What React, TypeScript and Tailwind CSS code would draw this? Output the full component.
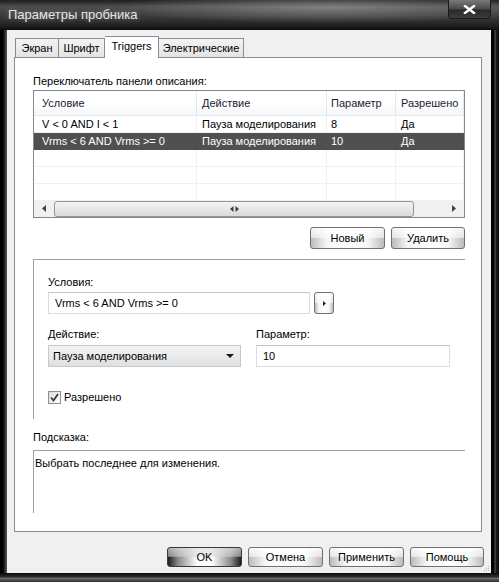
import React from 'react'

const btnLight =
  'bg-[linear-gradient(to_bottom,rgba(255,255,255,0.9)_0%,rgba(255,255,255,0.55)_48%,rgba(255,255,255,0)_52%),linear-gradient(to_right,#bcbcbc,#f6f6f6_22%,#ffffff_50%,#f6f6f6_78%,#bcbcbc)]'

function PushButton({ label, primary, w }: { label: string; primary?: boolean; w: string }) {
  return (
    <div
      className={
        'h-[20px] rounded-[3px] border flex items-center justify-center ' +
        w +
        ' ' +
        (primary
          ? 'border-[#3a3a3a] bg-[linear-gradient(to_bottom,rgba(225,225,225,0.75)_0%,rgba(215,215,215,0.55)_46%,rgba(255,255,255,0)_52%),linear-gradient(to_right,#1c1c1c,#8c8c8c_14%,#ffffff_40%,#ffffff_60%,#8c8c8c_86%,#1c1c1c)]'
          : 'border-[#707070] ' + btnLight)
      }
    >
      {label}
    </div>
  )
}

function Tri({ dir }: { dir: 'l' | 'r' }) {
  return (
    <svg width="4" height="7" viewBox="0 0 4 7">
      {dir === 'l' ? <path d="M4 0 L0 3.5 L4 7 Z" fill="#404040" /> : <path d="M0 0 L4 3.5 L0 7 Z" fill="#404040" />}
    </svg>
  )
}

const cols = [
  { w: 'w-[163px]', pl: 'pl-[8px]' },
  { w: 'w-[130px]', pl: 'pl-[5px]' },
  { w: 'w-[69px]', pl: 'pl-[4px]' },
  { w: 'flex-1', pl: 'pl-[5px]' },
]

const rows = [
  ['V < 0 AND I < 1', 'Пауза моделирования', '8', 'Да'],
  ['Vrms < 6 AND Vrms >= 0', 'Пауза моделирования', '10', 'Да'],
]

function TriggerTable() {
  const headers = ['Условие', 'Действие', 'Параметр', 'Разрешено']
  return (
    <div className="mt-[2px] w-[432px] h-[128px] border border-[#828790] bg-white flex flex-col overflow-hidden">
      <div className="h-[25px] flex bg-[linear-gradient(to_bottom,#ffffff_0%,#ffffff_50%,#f3f6fa_100%)] border-b border-[#e3e9ef] text-[#1c2230]">
        {headers.map((h, i) => (
          <div
            key={h}
            className={'flex items-center whitespace-nowrap overflow-hidden border-r border-[#e3e8ee] ' + cols[i].w + ' ' + cols[i].pl}
          >
            {h}
          </div>
        ))}
      </div>
      {rows.map((r, ri) => (
        <div
          key={ri}
          className={
            'h-[17px] flex ' + (ri === 1 ? 'bg-[#505050] text-white' : 'border-b border-[#f0f0f0]')
          }
        >
          {r.map((c, ci) => (
            <div
              key={ci}
              className={
                'flex items-center whitespace-nowrap overflow-hidden ' +
                cols[ci].w +
                ' ' +
                cols[ci].pl +
                (ri === 1 ? '' : ' border-r border-[#f0f0f0]')
              }
            >
              {c}
            </div>
          ))}
        </div>
      ))}
      {[0, 1].map((k) => (
        <div key={k} className="h-[17px] flex border-b border-[#f0f0f0]">
          {cols.map((c, ci) => (
            <div key={ci} className={'border-r border-[#f0f0f0] ' + c.w} />
          ))}
        </div>
      ))}
      <div className="flex-1 flex">
        {cols.map((c, ci) => (
          <div key={ci} className={'border-r border-[#f0f0f0] ' + c.w} />
        ))}
      </div>
      <div className="h-[17px] flex items-center bg-[#f0f0f0]">
        <div className="w-[20px] flex justify-center">
          <Tri dir="l" />
        </div>
        <div className="w-[360px] h-[16px] rounded-[3px] border border-[#959595] bg-[linear-gradient(to_bottom,#f4f4f4,#e8e8e8_50%,#dadada)] flex items-center justify-center">
          <svg width="9" height="6" viewBox="0 0 9 6">
            <path d="M3.5 0 L0 3 L3.5 6 Z M5.5 0 L9 3 L5.5 6 Z" fill="#3c3c3c" />
          </svg>
        </div>
        <div className="flex-1" />
        <div className="w-[20px] flex justify-center">
          <Tri dir="r" />
        </div>
      </div>
    </div>
  )
}

function ConditionGroup() {
  return (
    <div className="mt-[10px] w-[432px] h-[160px] border-t border-l border-[#a0a0a0] pl-[14px] flex flex-col">
      <div className="mt-[16px] h-[13px] leading-[13px]">Условия:</div>
      <div className="mt-[3px] flex gap-[4px]">
        <div className="w-[262px] h-[22px] border border-[#dcdcdc] border-t-[#c4c4c4] bg-white flex items-center pl-[6px]">
          Vrms &lt; 6 AND Vrms &gt;= 0
        </div>
        <div className={'w-[20px] h-[22px] rounded-[3px] border border-[#707070] flex items-center justify-center ' + btnLight}>
          <svg width="3" height="5" viewBox="0 0 3 5">
            <path d="M0 0 L3 2.5 L0 5 Z" fill="#202020" />
          </svg>
        </div>
      </div>
      <div className="mt-[14px] flex gap-[15px]">
        <div className="flex flex-col">
          <div className="h-[13px] leading-[13px]">Действие:</div>
          <div className="mt-[4px] w-[193px] h-[22px] border border-[#c8c8c8] bg-[linear-gradient(to_bottom,#f3f3f3,#ebebeb_50%,#dfdfdf)] flex items-center pl-[4px] pr-[6px]">
            <span className="flex-1">Пауза моделирования</span>
            <svg width="8" height="4" viewBox="0 0 8 4">
              <path d="M0 0 L8 0 L4 4 Z" fill="#1a1a1a" />
            </svg>
          </div>
        </div>
        <div className="flex flex-col">
          <div className="h-[13px] leading-[13px]">Параметр:</div>
          <div className="mt-[4px] w-[194px] h-[22px] border border-[#dcdcdc] border-t-[#c4c4c4] bg-white flex items-center pl-[6px]">
            10
          </div>
        </div>
      </div>
      <div className="mt-[22px] flex items-center gap-[3px]">
        <div className="w-[13px] h-[13px] border border-[#8e8f8f] bg-[linear-gradient(to_bottom_right,#dcdcdc,#ffffff)] flex items-center justify-center">
          <svg width="9" height="9" viewBox="0 0 9 9">
            <path d="M1 4.5 L3.5 7.5 L8 1" fill="none" stroke="#3a3a3a" strokeWidth="1.8" />
          </svg>
        </div>
        <span>Разрешено</span>
      </div>
    </div>
  )
}

export default function App() {
  return (
    <div className="w-[499px] h-[582px] flex flex-col bg-black font-['Liberation_Sans',Arial,sans-serif] text-[11px] text-black overflow-hidden">
      {/* title bar */}
      <div className="h-[30px] flex items-start bg-[radial-gradient(ellipse_220px_16px_at_66%_25%,rgba(190,190,190,0.45),rgba(190,190,190,0)),linear-gradient(to_bottom,#1e1e1e_0%,#4c4c4c_22%,#3a3a3a_55%,#1c1c1c_90%,#0c0c0c_100%)]">
        <div className="pl-[8px] h-[30px] flex items-center text-[13px] text-[#e6e6e6] [text-shadow:0_0_6px_rgba(255,255,255,0.35)]">
          Параметры пробника
        </div>
        <div className="flex-1" />
        <div className="mr-[8px] w-[43px] h-[19px] rounded-b-[4px] border border-t-0 border-[#1a1a1a] bg-[linear-gradient(to_bottom,#7a7a7a,#4a4a4a_50%,#2a2a2a_55%,#3c3c3c)] flex items-center justify-center">
          <svg width="13" height="9" viewBox="0 0 13 9">
            <path d="M2 1 L11 8 M11 1 L2 8" stroke="#ffffff" strokeWidth="2.4" strokeLinecap="square" />
          </svg>
        </div>
      </div>

      <div className="flex flex-1 min-h-0">
        <div className="w-[7px] bg-[linear-gradient(to_right,#000000_40%,#5a5a5a)]" />

        {/* client area */}
        <div className="w-[484px] bg-[#f0f0f0] flex flex-col pt-[6px] relative">
          {/* tabs */}
          <div className="h-[21px] pl-[8px] flex items-end">
            <div className="w-[44px] h-[19px] border border-b-0 border-[#898c95] bg-[linear-gradient(to_bottom,#f3f3f3,#e4e4e4)] flex items-center justify-center">
              Экран
            </div>
            <div className="w-[46px] h-[19px] border border-l-0 border-b-0 border-[#898c95] bg-[linear-gradient(to_bottom,#f3f3f3,#e4e4e4)] flex items-center justify-center">
              Шрифт
            </div>
            <div className="relative z-10 -mb-[1px] w-[54px] h-[22px] border border-l-0 border-b-0 border-[#898c95] bg-white flex items-center justify-center pb-[2px]">
              Triggers
            </div>
            <div className="w-[85px] h-[19px] border border-l-0 border-b-0 border-[#898c95] bg-[linear-gradient(to_bottom,#f3f3f3,#e4e4e4)] flex items-center justify-center">
              Электрические
            </div>
          </div>

          {/* tab panel */}
          <div className="ml-[7px] w-[468px] h-[475px] border border-[#898c95] bg-white flex flex-col pl-[18px]">
            <div className="mt-[17px] h-[13px] leading-[13px]">Переключатель панели описания:</div>
            <TriggerTable />
            <div className="mt-[9px] w-[432px] flex justify-end gap-[6px]">
              <div className={'w-[75px] h-[22px] rounded-[3px] border border-[#707070] flex items-center justify-center ' + btnLight}>
                Новый
              </div>
              <div className={'w-[74px] h-[22px] rounded-[3px] border border-[#707070] flex items-center justify-center ' + btnLight}>
                Удалить
              </div>
            </div>
            <ConditionGroup />
            <div className="mt-[12px] h-[13px] leading-[13px]">Подсказка:</div>
            <div className="mt-[6px] w-[432px] h-[63px] border-t border-l border-[#a0a0a0] pt-[4px] pl-[1px]">
              Выбрать последнее для изменения.
            </div>
          </div>

          {/* dialog buttons */}
          <div className="mt-[15px] pr-[7px] flex justify-end gap-[6px]">
            <PushButton label="OK" primary w="w-[75px]" />
            <PushButton label="Отмена" w="w-[75px]" />
            <PushButton label="Применить" w="w-[75px]" />
            <PushButton label="Помощь" w="w-[74px]" />
          </div>

          {/* size grip */}
          <svg className="absolute right-[1px] bottom-[1px]" width="7" height="7" viewBox="0 0 7 7">
            <rect x="5" y="1" width="1" height="1" fill="#b0b0b0" />
            <rect x="3" y="3" width="1" height="1" fill="#b0b0b0" />
            <rect x="5" y="3" width="1" height="1" fill="#b0b0b0" />
            <rect x="1" y="5" width="1" height="1" fill="#b0b0b0" />
            <rect x="3" y="5" width="1" height="1" fill="#b0b0b0" />
            <rect x="5" y="5" width="1" height="1" fill="#b0b0b0" />
          </svg>
        </div>

        <div className="w-[8px] bg-[linear-gradient(to_right,#000000_35%,#505050_50%,#1a1a1a_65%,#0a0a0a)]" />
      </div>
      <div className="h-[9px] bg-[linear-gradient(to_bottom,#0a0a0a_0%,#2a2a2a_40%,#6a6a6a_60%,#2a2a2a_100%)]" />
    </div>
  )
}
